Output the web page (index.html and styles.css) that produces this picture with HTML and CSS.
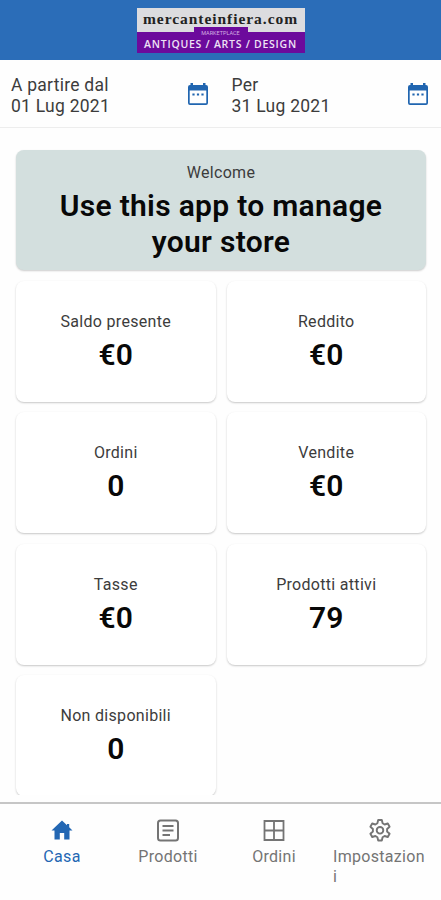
FILE: index.html
```html
<!DOCTYPE html>
<html lang="it">
<head>
    <meta charset="UTF-8">
    <meta name="viewport" content="width=device-width, initial-scale=1.0">
    <title>mercanteinfiera.com</title>
    <link rel="stylesheet" href="styles.css">
</head>
<body>
    <header class="header">
        <div class="logo">
            <div class="logo-name">mercanteinfiera.com</div>
            <div class="logo-bottom">
                <span class="logo-tag">MARKETPLACE</span>
                <span class="logo-text">ANTIQUES / ARTS / DESIGN</span>
            </div>
        </div>
    </header>

    <div class="dates">
        <div class="date">
            <div class="date-text">A partire dal<br>01 Lug 2021</div>
            <svg class="calendar" viewBox="0 0 20 22">
                <path fill-rule="evenodd" d="M2.5 0H5v2h10V0h2.500v2h.5a2 2 0 0 1 2 2v16a2 2 0 0 1-2 2H2a2 2 0 0 1-2-2V4a2 2 0 0 1 2-2h.5zM1.700 7.500v12.700h16.600V7.500z"/>
                <path d="M4.400 10.500h2.200v2H4.400zM8.900 10.500h2.200v2H8.900zM13.400 10.500h2.200v2h-2.200z"/>
            </svg>
        </div>
        <div class="date">
            <div class="date-text">Per<br>31 Lug 2021</div>
            <svg class="calendar" viewBox="0 0 20 22">
                <path fill-rule="evenodd" d="M2.500 0H5v2h10V0h2.500v2h.5a2 2 0 0 1 2 2v16a2 2 0 0 1-2 2H2a2 2 0 0 1-2-2V4a2 2 0 0 1 2-2h.5zM1.700 7.500v12.700h16.600V7.500z"/>
                <path d="M4.400 10.500h2.200v2H4.400zM8.900 10.500h2.200v2H8.900zM13.400 10.500h2.200v2h-2.200z"/>
            </svg>
        </div>
    </div>

    <main class="content">
        <div class="welcome">
            <p class="label">Welcome</p>
            <h1>Use this app to manage<br>your store</h1>
        </div>
        <div class="cards">
            <div class="card"><p class="label">Saldo presente</p><p class="value">€0</p></div>
            <div class="card"><p class="label">Reddito</p><p class="value">€0</p></div>
            <div class="card"><p class="label">Ordini</p><p class="value">0</p></div>
            <div class="card"><p class="label">Vendite</p><p class="value">€0</p></div>
            <div class="card"><p class="label">Tasse</p><p class="value">€0</p></div>
            <div class="card"><p class="label">Prodotti attivi</p><p class="value">79</p></div>
            <div class="card"><p class="label">Non disponibili</p><p class="value">0</p></div>
        </div>
    </main>

    <nav class="tabs">
        <a class="tab active">
            <svg viewBox="0 0 24 24"><path fill="currentColor" d="M12 2.500L1.500 12.500h3V21.500h5.300V15h4.400v6.500h5.300v-9h3L19.200 9.300V6h-2.200v1.200z"/></svg>
            <span>Casa</span>
        </a>
        <a class="tab">
            <svg viewBox="0 0 24 24" fill="none" stroke="currentColor" stroke-width="2"><rect x="2" y="2.500" width="20" height="20" rx="2.500"/><path d="M6.500 8h11M6.500 12.500h11M6.500 17h7.500"/></svg>
            <span>Prodotti</span>
        </a>
        <a class="tab">
            <svg viewBox="0 0 24 24" fill="none" stroke="currentColor" stroke-width="1.800"><path d="M2.500 3h19v19h-19zM12 3v19M2.500 12.500h19"/></svg>
            <span>Ordini</span>
        </a>
        <a class="tab">
            <svg viewBox="0 0 24 24" fill="none" stroke="currentColor" stroke-width="1.900" stroke-linejoin="round"><path d="M10.200 2h3.600l.8 3.300 2 1.200 3.200-1 1.800 3.200-2.500 2.300v2.500l2.500 2.300-1.800 3.200-3.200-1-2 1.200-.8 3.300h-3.600l-.8-3.300-2-1.200-3.200 1-1.800-3.200 2.500-2.300V11L2.400 8.700l1.800-3.200 3.200 1 2-1.200z"/><circle cx="12" cy="12.300" r="3.300"/></svg>
            <span>Impostazioni</span>
        </a>
    </nav>
</body>
</html>
```

FILE: styles.css
```css
* {
    box-sizing: border-box;
}
body {
    margin: 0;
    height: 900px;
    display: flex;
    flex-direction: column;
    overflow: hidden;
    background: #fefefe;
    color: #222;
    font-family: Roboto, "Liberation Sans", sans-serif;
}
p, h1 {
    margin: 0;
}
.header {
    height: 60px;
    flex: none;
    display: flex;
    justify-content: center;
    padding-top: 8px;
    background: #2b6db8;
}
.logo {
    width: 168px;
    height: 45px;
    background: #dcdcdf;
}
.logo-name {
    height: 24px;
    font: bold 15.5px/22px "Liberation Serif", serif;
    letter-spacing: 0.95px;
    text-align: center;
    white-space: nowrap;
    color: #222;
}
.logo-bottom {
    position: relative;
    height: 21px;
    background: #6c0a9c;
    text-align: center;
}
.logo-tag {
    position: absolute;
    top: -5px;
    left: 57px;
    width: 54px;
    height: 8px;
    background: #6c0a9c;
    color: #d3b0e2;
    font-size: 5.5px;
    line-height: 12px;
}
.logo-text {
    display: block;
    padding-top: 2px;
    color: #efe2f5;
    font: 600 10.5px/21px "Open Sans", sans-serif;
    letter-spacing: 0.75px;
    white-space: nowrap;
}
.dates {
    height: 68px;
    flex: none;
    display: flex;
    border-bottom: 1px solid #ededed;
}
.date {
    flex: 1;
    display: flex;
    justify-content: space-between;
    padding: 15px 13px 0 11px;
}
.date-text {
    font-size: 17.5px;
    line-height: 21px;
    letter-spacing: 0.25px;
    color: #3c3c3c;
}
.calendar {
    width: 20px;
    height: 22px;
    margin-top: 8px;
    fill: #2065b0;
}
.content {
    height: 667px;
    flex: none;
    overflow: hidden;
    padding: 22px 15px 0 16px;
}
.welcome {
    height: 120px;
    padding-top: 12px;
    border-radius: 8px;
    background: #d3dfde;
    box-shadow: 0 1px 2px rgba(0, 0, 0, 0.2);
    text-align: center;
}
.label {
    font-size: 16px;
    line-height: 22px;
    letter-spacing: 0.3px;
    color: #3c3c3c;
}
.welcome h1 {
    padding-top: 4px;
    font-size: 30px;
    line-height: 36px;
    letter-spacing: 0.3px;
    font-weight: 600;
    color: #080808;
}
.cards {
    display: grid;
    grid-template-columns: 1fr 1fr;
    grid-auto-rows: 121px;
    gap: 10.3px 11px;
    margin-top: 11px;
}
.card {
    padding-top: 30px;
    border-radius: 8px;
    background: #fff;
    box-shadow: 0 1px 2px rgba(0, 0, 0, 0.22);
    text-align: center;
}
.value {
    padding-top: 3px;
    font-size: 30px;
    line-height: 37px;
    font-weight: 600;
    color: #080808;
}
.tabs {
    flex: 1;
    display: flex;
    margin-top: 7px;
    padding: 0 8px 0 9px;
    border-top: 2px solid #c6c6c6;
    color: #747474;
}
.tab {
    flex: 1;
    display: flex;
    flex-direction: column;
    align-items: center;
    padding: 14px 6px 0;
    font-size: 16px;
    line-height: 20px;
    letter-spacing: 0.3px;
}
.tab svg {
    width: 24px;
    height: 24px;
    margin-bottom: 5px;
}
.tab span {
    max-width: 100%;
    word-break: break-all;
}
.tab.active {
    color: #2367b3;
}
```
